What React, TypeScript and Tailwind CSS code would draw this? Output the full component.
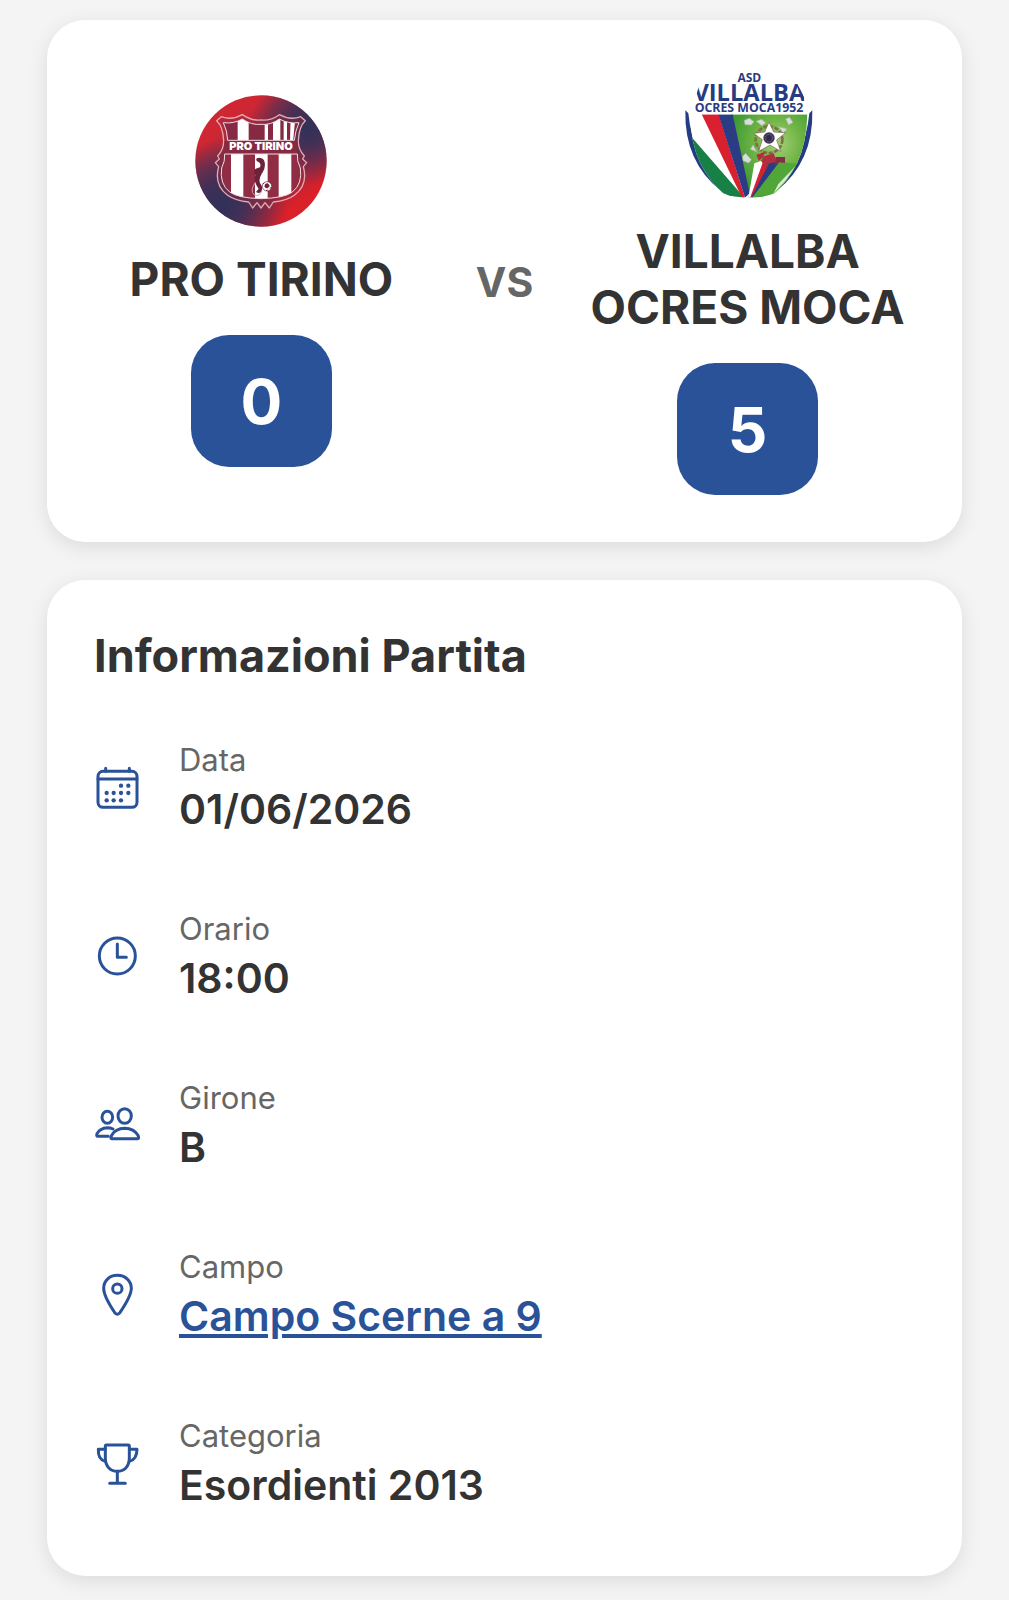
import React from 'react'

const ProTirinoLogo = () => (
    <svg viewBox="49 43 396 396" className="w-[132px] h-[132px]" role="img" aria-label="Pro Tirino">
        <defs>
            <linearGradient id="tirino" x1="0.15" y1="0.05" x2="0.85" y2="0.95">
                <stop offset="0" stopColor="#cf2633" />
                <stop offset="0.18" stopColor="#cf2633" />
                <stop offset="0.42" stopColor="#812c47" />
                <stop offset="0.6" stopColor="#8c2b45" />
                <stop offset="0.88" stopColor="#dc2028" />
                <stop offset="1" stopColor="#d3232e" />
            </linearGradient>
            <radialGradient id="tirinoTop" cx="0.86" cy="0.24" r="0.44">
                <stop offset="0" stopColor="#2e3159" />
                <stop offset="0.3" stopColor="#3a3058" stopOpacity="0.9" />
                <stop offset="1" stopColor="#3a3058" stopOpacity="0" />
            </radialGradient>
            <radialGradient id="tirinoBottom" cx="0.2" cy="0.84" r="0.5">
                <stop offset="0" stopColor="#2e3159" />
                <stop offset="0.35" stopColor="#3a3058" stopOpacity="0.9" />
                <stop offset="1" stopColor="#3a3058" stopOpacity="0" />
            </radialGradient>
            <clipPath id="tirinoUpper">
                <path d="M134 126 Q165 130 191 115 Q218 134 247 131 Q276 134 302 115 Q329 130 361 126 Q350 150 347 179 H147 Q146 150 134 126Z" />
            </clipPath>
            <clipPath id="tirinoLower">
                <path d="M138 220 H356 Q354 240 365 262 Q372 310 341 334 Q318 352 247 354 Q176 352 153 334 Q122 310 129 262 Q140 240 138 220Z" />
            </clipPath>
        </defs>
        <circle cx="247" cy="241" r="197" fill="url(#tirino)" />
        <circle cx="247" cy="241" r="197" fill="url(#tirinoTop)" />
        <circle cx="247" cy="241" r="197" fill="url(#tirinoBottom)" />
        <path
            d="M191 102 Q218 121 247 118 Q276 121 302 102 Q335 120 366 108 L380 120 Q361 137 359 180 Q358 205 377 226 L372 235 L384 246 L374 258 Q389 312 348 343 Q325 360 284 364 L272 382 L259 366 L247 382 L235 366 L222 382 L210 364 Q169 360 146 343 Q105 312 120 258 L110 246 L122 235 L117 226 Q136 205 135 180 Q133 137 114 120 L128 108 Q160 120 191 102Z"
            fill="#902c43"
            fillOpacity="0.45"
            stroke="#e3aab2"
            strokeWidth="4"
            strokeLinejoin="round"
        />
        <g clipPath="url(#tirinoUpper)">
            <rect x="120" y="100" width="260" height="85" fill="#852a42" />
            <path d="M177 100H210V185H177Z M258 100H268V185H258Z M283 100H305V185H283Z M315 100H325V185H315Z M336 100H351L343 185H334Z" fill="#fff" />
        </g>
        <path d="M134 126 Q165 130 191 115 Q218 134 247 131 Q276 134 302 115 Q329 130 361 126 Q350 150 347 179 H147 Q146 150 134 126Z" fill="none" stroke="#f1dbe0" strokeWidth="3" />
        <g clipPath="url(#tirinoLower)">
            <rect x="115" y="218" width="265" height="140" fill="#902c43" />
            <path d="M157 218H194V360H157Z M229 218H267V360H229Z M300 218H338V360H300Z" fill="#fff" />
        </g>
        <path d="M138 220 H356 Q354 240 365 262 Q372 310 341 334 Q318 352 247 354 Q176 352 153 334 Q122 310 129 262 Q140 240 138 220Z" fill="none" stroke="#f1dbe0" strokeWidth="3" />
        <path d="M235 242 Q228 232 242 231 Q256 232 258 245 Q261 262 252 275 Q239 295 244 307 Q253 318 249 330 Q244 341 232 334 L240 324 Q222 301 230 283 Q222 273 231 264 L244 260 Q249 247 235 242Z" fill="#6e2239" />
        <path d="M230 305 Q213 331 226 342 Q242 350 250 330" fill="none" stroke="#caa0aa" strokeWidth="3" />
        <circle cx="265" cy="317" r="14" fill="#fff" stroke="#6e2239" strokeWidth="2" />
        <path d="M260 311L267 309L272 316L266 322L259 319Z M252 310L257 307M274 324L278 319M262 330L267 328" fill="#6e2239" stroke="#6e2239" strokeWidth="3" />
        <path d="M137 182H357V217H137Z" fill="#852a42" />
        <text x="247" y="209" textAnchor="middle" fill="#fff" className="font-['Inter'] font-black text-[33px]">PRO TIRINO</text>
    </svg>
)

const VillalbaLogo = () => (
    <svg viewBox="33 21 396 396" className="w-[132px] h-[132px]" role="img" aria-label="Villalba Ocres Moca">
        <defs>
            <radialGradient id="field" cx="0.6" cy="0.35" r="0.6">
                <stop offset="0" stopColor="#a6cf7b" />
                <stop offset="0.5" stopColor="#6fb544" />
                <stop offset="1" stopColor="#3f9a35" />
            </radialGradient>
            <clipPath id="villalbaShield">
                <path d="M57 163H409Q407 250 378 310Q350 365 310 400Q280 413 233 413Q185 413 157 400Q116 365 88 310Q59 250 57 163Z" />
            </clipPath>
            <clipPath id="villalbaName">
                <path d="M74 112L86 70H378L400 112V128H74Z" />
            </clipPath>
        </defs>
        <path d="M43 151Q39 305 150 393L158 400Q65 293 52 160Z" fill="#263c82" />
        <path d="M424 151Q428 305 317 393L309 400Q402 293 415 160Z" fill="#263c82" />
        <g clipPath="url(#villalbaShield)">
            <rect x="50" y="160" width="370" height="260" fill="#fff" />
            <path d="M180 163H412V413H236Z" fill="url(#field)" />
            <path d="M50 218L220 413H50Z" fill="#178044" />
            <path d="M92 163H143L222 413H213Z" fill="#d9202e" />
            <path d="M142 163H185L236 400L222 413Z" fill="#2b3c85" />
            <path d="M252 335H264L237 413H232Z" fill="#178044" />
            <path d="M250 310L280 300L240 413H232Z" fill="#fff" />
            <path d="M278 300L300 300L242 412H238Z" fill="#d9202e" />
            <path d="M299 300L326 306L245 412H241Z" fill="#2b3c85" />
            <path d="M326 306L382 311L310 400L244 413Z" fill="#51a638" />
            <path d="M374 318L345 360L306 403L322 372Z" fill="#dcecd3" />
        </g>
        <path d="M220 181L235 175L249 185L241 195L222 194Z M256 184L271 178L284 188L273 197Z M344 177L355 172L366 187L353 195Z M215 289L224 280L241 299L233 309L216 302Z M323 200L348 207L337 219Z M246 255L238 268L257 275Z" fill="#d8dddb" stroke="#a8b5a7" strokeWidth="2" />
        <circle cx="294" cy="239" r="40" fill="none" stroke="#7d7142" strokeWidth="8" strokeDasharray="13 4" />
        <path d="M256 284L282 276L277 292L263 302Z M280 288L308 280L318 306L289 311L286 327L270 302Z" fill="#b0303d" />
        <path d="M314 291H342V309L324 307L312 319Z" fill="#872e46" />
        <path d="M294 186L308 216L344 218L317 240L329 274L297 255L263 274L274 239L248 220L281 216Z" fill="#fff" stroke="#736850" strokeWidth="2" />
        <circle cx="294" cy="234" r="17" fill="#433653" />
        <circle cx="294" cy="234" r="11" fill="none" stroke="#74607a" strokeWidth="3" strokeDasharray="5 4" />
        <path d="M287 230L294 224L301 231L299 242H288Z" fill="#292a57" />
        <g fill="#263c82" textAnchor="middle">
            <text x="235" y="66" className="font-['Open_Sans'] font-bold text-[36px]">ASD</text>
            <g clipPath="url(#villalbaName)">
                <text x="235" y="122" className="font-['Open_Sans'] font-bold text-[71px]">VILLALBA</text>
            </g>
            <text x="234" y="156" className="font-['Open_Sans'] font-bold text-[37px]">OCRES MOCA1952</text>
        </g>
    </svg>
)

const CalendarIcon = () => (
    <>
        <rect x="39" y="49" width="117" height="108" rx="15" />
        <path d="M39 72H156M62 40V49M133 40V49" />
        <g fill="currentColor" stroke="none">
            <circle cx="108" cy="92" r="6.5" />
            <circle cx="130" cy="92" r="6.5" />
            <circle cx="65" cy="114" r="6.5" />
            <circle cx="86" cy="114" r="6.5" />
            <circle cx="108" cy="114" r="6.5" />
            <circle cx="130" cy="114" r="6.5" />
            <circle cx="65" cy="136" r="6.5" />
            <circle cx="86" cy="136" r="6.5" />
            <circle cx="108" cy="136" r="6.5" />
        </g>
    </>
)

const ClockIcon = () => (
    <>
        <circle cx="97" cy="96" r="54" />
        <path d="M97 60V100H124" />
    </>
)

const PeopleIcon = () => (
    <>
        <ellipse cx="119" cy="69" rx="20" ry="22" />
        <ellipse cx="67" cy="73" rx="16" ry="18" />
        <path d="M80 137Q75 137 80 127Q91 107 119 106Q147 107 159 127Q163 137 158 137Z" />
        <path d="M84 108Q76 104 67 104Q45 105 36 122Q33 130 39 130H70" />
    </>
)

const PinIcon = () => (
    <>
        <path d="M97 40C73 40 56 57 56 79C56 102 77 134 90 153Q97 160 104 153C117 134 139 102 139 79C139 57 121 40 97 40Z" />
        <circle cx="97" cy="80" r="14" />
    </>
)

const TrophyIcon = () => (
    <>
        <path d="M61 45Q61 42 64 42H130Q133 42 133 45V82C133 107 117 121 97 121S61 107 61 82Z" />
        <path d="M61 55H40C39 75 47 88 62 92M133 55H156C156 75 148 88 132 92M97 121V157M74 157H121" />
    </>
)

const matchInfo = [
    { label: 'Data', value: '01/06/2026', icon: <CalendarIcon /> },
    { label: 'Orario', value: '18:00', icon: <ClockIcon /> },
    { label: 'Girone', value: 'B', icon: <PeopleIcon /> },
    { label: 'Campo', value: 'Campo Scerne a 9', icon: <PinIcon />, link: true },
    { label: 'Categoria', value: 'Esordienti 2013', icon: <TrophyIcon /> },
]

const Team = ({ name, score, logo }: any) => (
    <div className="flex-1 flex flex-col items-center">
        {logo}
        <h2 className="mt-6 mb-7 text-[46px] leading-[56px] font-bold text-center">{name}</h2>
        <div className="flex items-center justify-center w-[141px] h-[132px] rounded-[38px] bg-[#2a5298] text-white text-[62px] font-bold">
            {score}
        </div>
    </div>
)

const App = () => {
    return (
        <main className="min-h-screen bg-[#f4f4f4] px-[47px] pt-5 pb-6 flex flex-col gap-[38px] font-['Inter',sans-serif] text-[#333]">
            <section className="flex items-center p-[47px] rounded-[38px] bg-white shadow-[0_5px_20px_rgba(0,0,0,0.1)]">
                <Team name="PRO TIRINO" score={0} logo={<ProTirinoLogo />} />
                <span className="mx-[47px] pt-1 text-[41px] font-bold text-[#666]">VS</span>
                <Team name="VILLALBA OCRES MOCA" score={5} logo={<VillalbaLogo />} />
            </section>

            <section className="p-[47px] rounded-[38px] bg-white shadow-[0_5px_20px_rgba(0,0,0,0.1)]">
                <h1 className="mb-[54px] text-[45px] leading-[58px] font-bold">Informazioni Partita</h1>
                <dl className="flex flex-col gap-[71px] pb-4">
                    {
                        matchInfo.map(item => (
                            <div key={item.label} className="flex items-center gap-[38px]">
                                <svg
                                    viewBox="27 30 141 141"
                                    className="w-[47px] h-[47px] shrink-0 text-[#2a5298]"
                                    fill="none"
                                    stroke="currentColor"
                                    strokeWidth="9"
                                    strokeLinecap="round"
                                    strokeLinejoin="round"
                                    aria-hidden="true"
                                >
                                    {item.icon}
                                </svg>
                                <div>
                                    <dt className="text-[31px] leading-[42px] text-[#666]">{item.label}</dt>
                                    <dd className="text-[41px] leading-[56px] font-semibold">
                                        {item.link
                                            ? <a href="#campo" className="text-[#2a5298] underline">{item.value}</a>
                                            : item.value}
                                    </dd>
                                </div>
                            </div>
                        ))
                    }
                </dl>
            </section>
        </main>
    )
}

export default App
